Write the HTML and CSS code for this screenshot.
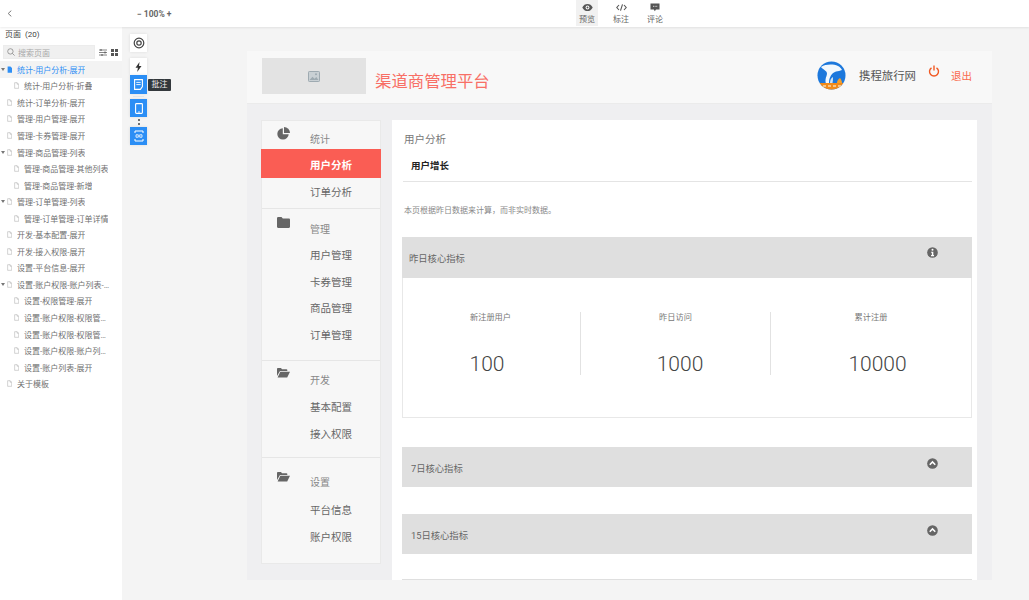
FILE: index.html
```html
<!DOCTYPE html>
<html lang="zh">
<head>
<meta charset="utf-8">
<title>渠道商管理平台</title>
<link rel="stylesheet" href="styles.css">
</head>
<body>
<svg class="defs" width="0" height="0" aria-hidden="true">
  <symbol id="doc" viewBox="0 0 8 10"><path d="M1 .5h4l2.500 2.500v6.500h-6.500z M5 .5v2.500h2.500" fill="#fff" stroke="#a8a8a8" stroke-width=".8"/></symbol>
  <symbol id="folder-open" viewBox="0 0 13 10"><path d="M0 1.200C0 .5.400.1 1 .1h3l1 1.200h4.500c.5 0 .8.300.8.800v.8H3L0 8z M3.300 3.800H13L10.200 9.600H.6z" fill="#666"/></symbol>
  <symbol id="chev-up" viewBox="0 0 12 12"><circle cx="6" cy="6" r="5.800" fill="#666"/><path d="M3 7.300l3-3 3 3" fill="none" stroke="#fff" stroke-width="1.700"/></symbol>
</svg>
<header class="topbar">
  <div class="back"><svg width="5" height="7" viewBox="0 0 5 7"><path d="M4.300.6L1.200 3.500 4.300 6.400" fill="none" stroke="#777" stroke-width="1"/></svg></div>
  <div class="zoom">− 100% +</div>
  <nav class="modes">
    <div class="mode mode-active">
      <svg width="11" height="8" viewBox="0 0 11 8"><path d="M.3 4C1.500 1.500 3.300.4 5.500.4S9.500 1.500 10.700 4C9.500 6.500 7.700 7.600 5.500 7.600S1.500 6.500.3 4z" fill="#555"/><circle cx="5.500" cy="4" r="1.900" fill="#fff"/><circle cx="5.500" cy="4" r="1" fill="#555"/></svg>
      <span>预览</span>
    </div>
    <div class="mode">
      <svg width="11" height="8" viewBox="0 0 11 8"><path d="M3 1.500L.8 4 3 6.500M8 1.500L10.200 4 8 6.500M6.500.8L4.500 7.200" fill="none" stroke="#555" stroke-width="1.100"/></svg>
      <span>标注</span>
    </div>
    <div class="mode">
      <svg width="10" height="9" viewBox="0 0 10 9"><path d="M.5.500h9v6H6L4.800 8.300 3.800 6.500H.5z" fill="#555"/><path d="M3 3.300h.8M4.700 3.300h.8M6.400 3.300h.8" stroke="#fff" stroke-width="1"/></svg>
      <span>评论</span>
    </div>
  </nav>
</header>
<div class="workspace">
  <aside class="sidebar">
    <div class="pages-title">页面&nbsp;&nbsp;(20)</div>
    <div class="search-row">
      <div class="search">
        <svg width="8" height="8" viewBox="0 0 8 8"><circle cx="3.400" cy="3.400" r="2.700" fill="none" stroke="#888" stroke-width=".8"/><path d="M5.400 5.400L7.600 7.600" stroke="#888" stroke-width=".8"/></svg>
        <span>搜索页面</span>
      </div>
      <svg class="tool" width="8" height="7" viewBox="0 0 8 7"><path d="M0 1h8M0 3.500h8M0 6h8" stroke="#777" stroke-width=".9"/><path d="M2 0v2M6 2.500v2M3 5v2" stroke="#555" stroke-width="1"/></svg>
      <svg class="tool" width="7" height="7" viewBox="0 0 7 7"><path d="M0 0h3v3H0zM4 0h3v3H4zM0 4h3v3H0zM4 4h3v3H4z" fill="#555"/></svg>
    </div>
    <ul class="tree">
      <li class="row row-active"><i class="caret"></i><svg class="doc" width="6" height="8" viewBox="0 0 8 10"><path d="M1 0h4.500L8 2.500V10H1z" fill="#2e8ff5"/></svg><span>统计-用户分析-展开</span></li>
      <li class="row sub"><svg class="doc"><use href="#doc"/></svg><span>统计-用户分析-折叠</span></li>
      <li class="row"><svg class="doc"><use href="#doc"/></svg><span>统计-订单分析-展开</span></li>
      <li class="row"><svg class="doc"><use href="#doc"/></svg><span>管理-用户管理-展开</span></li>
      <li class="row"><svg class="doc"><use href="#doc"/></svg><span>管理-卡券管理-展开</span></li>
      <li class="row"><i class="caret"></i><svg class="doc"><use href="#doc"/></svg><span>管理-商品管理-列表</span></li>
      <li class="row sub"><svg class="doc"><use href="#doc"/></svg><span>管理-商品管理-其他列表</span></li>
      <li class="row sub"><svg class="doc"><use href="#doc"/></svg><span>管理-商品管理-新增</span></li>
      <li class="row"><i class="caret"></i><svg class="doc"><use href="#doc"/></svg><span>管理-订单管理-列表</span></li>
      <li class="row sub"><svg class="doc"><use href="#doc"/></svg><span>管理-订单管理-订单详情</span></li>
      <li class="row"><svg class="doc"><use href="#doc"/></svg><span>开发-基本配置-展开</span></li>
      <li class="row"><svg class="doc"><use href="#doc"/></svg><span>开发-接入权限-展开</span></li>
      <li class="row"><svg class="doc"><use href="#doc"/></svg><span>设置-平台信息-展开</span></li>
      <li class="row"><i class="caret"></i><svg class="doc"><use href="#doc"/></svg><span>设置-账户权限-账户列表-展开</span></li>
      <li class="row sub"><svg class="doc"><use href="#doc"/></svg><span>设置-权限管理-展开</span></li>
      <li class="row sub"><svg class="doc"><use href="#doc"/></svg><span>设置-账户权限-权限管理-展开</span></li>
      <li class="row sub"><svg class="doc"><use href="#doc"/></svg><span>设置-账户权限-权限管理-新增</span></li>
      <li class="row sub"><svg class="doc"><use href="#doc"/></svg><span>设置-账户权限-账户列表-新增</span></li>
      <li class="row sub"><svg class="doc"><use href="#doc"/></svg><span>设置-账户列表-展开</span></li>
      <li class="row"><svg class="doc"><use href="#doc"/></svg><span>关于模板</span></li>
    </ul>
  </aside>
  <main class="canvas">
    <div class="float-tools">
      <div class="ft ft-white ft-target"><svg width="12" height="12" viewBox="0 0 12 12"><circle cx="6" cy="6" r="4.800" fill="none" stroke="#444" stroke-width="1.200"/><circle cx="6" cy="6" r="2.200" fill="none" stroke="#444" stroke-width="1.200"/></svg></div>
      <div class="ft ft-white ft-bolt"><svg width="7" height="10" viewBox="0 0 7 10"><path d="M4.500 0L.5 5.700h2.400L2.200 10l4.300-6H4z" fill="#333"/></svg></div>
      <div class="ft ft-blue ft-note"><svg width="9" height="11" viewBox="0 0 9 11"><path d="M.6.600h7.800v7L6.400 10.400H.6z" fill="none" stroke="#fff" stroke-width="1.100"/><path d="M2.300 3.400h4.400M2.300 5.600h4.400" stroke="#fff" stroke-width=".9"/></svg></div>
      <div class="ft-line"></div>
      <div class="ft ft-blue ft-phone"><svg width="8" height="11" viewBox="0 0 8 11"><rect x=".6" y=".6" width="6.800" height="9.800" rx=".8" fill="none" stroke="#fff" stroke-width="1.100"/><path d="M3 9h2" stroke="#fff" stroke-width=".8"/></svg></div>
      <div class="ft-dots"><i></i><i></i></div>
      <div class="ft ft-blue ft-scan"><svg width="10" height="12" viewBox="0 0 10 12"><path d="M1 3V1h8v2M1 9v2h8V9" fill="none" stroke="#fff" stroke-width="1"/><path d="M2 4.800h2.300v2.400H2zM5.700 4.800H8v2.400H5.700z" fill="none" stroke="#fff" stroke-width=".8"/></svg></div>
      <div class="tip">批注</div>
    </div>
    <section class="artboard">
      <header class="app-head">
        <div class="logo-ph"><svg width="12" height="11" viewBox="0 0 12 11"><rect x=".5" y=".5" width="11" height="10" rx=".8" fill="#c9d0d4" stroke="#9eaab1"/><path d="M1.500 9l3-3.300 2 2L8.300 6l2.200 3z" fill="#9eaab1"/><circle cx="8" cy="3.200" r="1" fill="#9eaab1"/></svg></div>
        <h1 class="app-title">渠道商管理平台</h1>
        <div class="app-right">
          <svg class="brand" width="29" height="29" viewBox="0 0 29 29"><defs><clipPath id="brand-clip"><circle cx="14.500" cy="14.500" r="14"/></clipPath></defs><g clip-path="url(#brand-clip)"><rect width="29" height="29" fill="#1c78dc"/><path d="M4 6c5-3 12-3 17-1 2 1 3 2 4 4-2 1-4 1-6 1.500-3 1-5 3-6 6-1 2-1 4-1 6.500H9c-1-3-.5-6 .5-8 1-3 .5-4-1.500-5.500C6.500 8 5 7.500 4 6z" fill="#f2f8fd"/><path d="M13 22c0-3 1-5 3-6 0 2 0 4-.5 6z" fill="#cfe5f8"/><path d="M20 22c0-2 1-4 3-5 1 1 2 3 2 5z" fill="#f5a02c"/><rect y="22" width="29" height="7" fill="#f08a1a"/><path d="M6 25h3M11 25h3M16 25h3M21 25h3" stroke="#fbd9a8" stroke-width="1.400"/></g></svg>
          <span class="brand-name">携程旅行网</span>
          <svg class="power" width="12" height="12" viewBox="0 0 12 12"><path d="M3.500 2.800a4.500 4.500 0 1 0 5 0" fill="none" stroke="#f15a24" stroke-width="1.400"/><path d="M6 .5v5" stroke="#f15a24" stroke-width="1.400"/></svg>
          <span class="logout">退出</span>
        </div>
      </header>
      <div class="app-body">
        <nav class="side-nav">
          <div class="group group-stat">
            <div class="group-head">
              <svg width="13" height="13" viewBox="0 0 13 13"><path d="M5.800 1.200A5.700 5.700 0 1 0 11.700 7.200H5.800z" fill="#666"/><path d="M7 0a6 6 0 0 1 6 6H7z" fill="#666"/></svg>
              <span>统计</span>
            </div>
            <a class="item item-active">用户分析</a>
            <a class="item">订单分析</a>
          </div>
          <div class="group group-manage">
            <div class="group-head">
              <svg width="13" height="11" viewBox="0 0 13 11"><path d="M0 1.300C0 .6.500 0 1.200 0h3.300l1.300 1.600h6c.7 0 1.200.5 1.200 1.200v7c0 .7-.5 1.200-1.200 1.200H1.200C.5 11 0 10.500 0 9.800z" fill="#666"/></svg>
              <span>管理</span>
            </div>
            <a class="item">用户管理</a>
            <a class="item">卡券管理</a>
            <a class="item">商品管理</a>
            <a class="item">订单管理</a>
          </div>
          <div class="group group-dev">
            <div class="group-head">
              <svg width="13" height="10"><use href="#folder-open"/></svg>
              <span>开发</span>
            </div>
            <a class="item">基本配置</a>
            <a class="item">接入权限</a>
          </div>
          <div class="group group-set">
            <div class="group-head">
              <svg width="13" height="10"><use href="#folder-open"/></svg>
              <span>设置</span>
            </div>
            <a class="item">平台信息</a>
            <a class="item">账户权限</a>
          </div>
        </nav>
        <div class="content">
          <div class="crumb">用户分析</div>
          <div class="tabs"><span>用户增长</span></div>
          <p class="note">本页根据昨日数据来计算，而非实时数据。</p>
          <section class="panel panel-first">
            <div class="panel-head"><span>昨日核心指标</span>
              <svg width="11" height="11" viewBox="0 0 12 12"><circle cx="6" cy="6" r="5.800" fill="#666"/><circle cx="6" cy="3" r="1.100" fill="#fff"/><path d="M4.500 5.100h2.400v3.600h.8V10H4.400V8.700h.9V6.300h-.8z" fill="#fff"/></svg>
            </div>
            <div class="stats">
              <div class="stat"><div class="stat-label">新注册用户</div><div class="stat-num num-a">100</div></div>
              <div class="stat"><div class="stat-label">昨日访问</div><div class="stat-num num-b">1000</div></div>
              <div class="stat"><div class="stat-label">累计注册</div><div class="stat-num num-c">10000</div></div>
            </div>
          </section>
          <section class="panel panel-week">
            <div class="panel-head"><span>7日核心指标</span><svg width="11" height="11"><use href="#chev-up"/></svg></div>
          </section>
          <section class="panel panel-half">
            <div class="panel-head"><span>15日核心指标</span><svg width="11" height="11"><use href="#chev-up"/></svg></div>
          </section>
          <section class="panel panel-last">
            <div class="panel-head"></div>
          </section>
        </div>
      </div>
    </section>
  </main>
</div>
</body>
</html>
```
FILE: styles.css
```css
* { box-sizing: border-box; }
html, body { margin: 0; height: 100%; }
body {
  width: 1029px;
  height: 600px;
  overflow: hidden;
  display: flex;
  flex-direction: column;
  font-family: Roboto, "Noto Sans CJK SC", sans-serif;
  color: #666;
  background: #f4f4f4;
}
.defs { position: absolute; }

.topbar {
  position: relative;
  z-index: 3;
  flex: 0 0 27px;
  display: flex;
  align-items: center;
  background: #fff;
  box-shadow: 0 1px 2px rgba(0,0,0,.08);
}
.back { width: 137px; padding-left: 7px; display: flex; align-items: center; }
.zoom { font-size: 8.500px; font-weight: bold; color: #666; }
.modes {
  position: absolute;
  left: 576px;
  top: 0;
  display: flex;
  gap: 12px;
}
.mode {
  width: 22px;
  height: 26px;
  display: flex;
  flex-direction: column;
  align-items: center;
  padding-top: 3px;
  gap: 2px;
  font-size: 8px;
  line-height: 11px;
  color: #666;
}
.mode svg { height: 9px; }
.mode-active { background: #f1f1f1; }

.workspace { flex: 1; display: flex; min-height: 0; }
.sidebar { flex: 0 0 122px; background: #fff; }
.pages-title { font-size: 8px; line-height: 12px; padding: 2px 0 0 5px; color: #444; height: 18px; }
.search-row { display: flex; align-items: center; padding-left: 3px; height: 14px; }
.search {
  width: 92px;
  height: 14px;
  display: flex;
  align-items: center;
  gap: 3px;
  padding-left: 3px;
  background: #f0f0f0;
  border: 1px solid #ececec;
  font-size: 8px;
  color: #a8a8a8;
}
.tool { margin-left: 4px; }
.tool + .tool { margin-left: 4px; }
.tree { list-style: none; margin: 2px 0 0; padding: 0; }
.row {
  position: relative;
  height: 16.550px;
  display: flex;
  align-items: center;
  padding-left: 7px;
  font-size: 8px;
  color: #707070;
  white-space: nowrap;
}
.row span { display: block; max-width: 97px; overflow: hidden; text-overflow: ellipsis; }
.row .doc { width: 5px; height: 7px; flex: none; margin-right: 5px; }
.sub { padding-left: 14px; }
.sub span { max-width: 87px; }
.row-active { background: #f3f3f3; color: #2e8ff5; }
.caret {
  position: absolute;
  left: 1px;
  top: 7px;
  border-left: 2px solid transparent;
  border-right: 2px solid transparent;
  border-top: 3px solid #777;
}

.canvas { position: relative; flex: 1; padding: 24px 37px 20px 125px; min-width: 0; }
.float-tools { position: absolute; left: 8px; top: 7px; width: 18px; }
.ft { width: 17px; display: flex; align-items: center; justify-content: center; box-shadow: 0 0 3px rgba(0,0,0,.1); }
.ft-white { background: #fff; }
.ft-blue { background: #2b8ef5; }
.ft-target { height: 18px; margin-bottom: 6px; }
.ft-bolt { height: 17px; }
.ft-note { height: 19px; }
.ft-line { width: 11px; height: 1px; margin: 2px 3px 2px; background: #dfe7ef; }
.ft-phone { height: 18px; }
.ft-dots { height: 10px; display: flex; flex-direction: column; align-items: center; justify-content: center; gap: 2px; }
.ft-dots i { width: 2px; height: 2px; background: #444; border-radius: 50%; }
.ft-scan { height: 18px; }
.tip {
  position: absolute;
  left: 18px;
  top: 45px;
  width: 23px;
  height: 12px;
  background: #33383c;
  color: #eee;
  font-size: 8px;
  line-height: 12px;
  text-align: center;
  border-radius: 1px;
}

.artboard { width: 745px; height: 529px; background: #efeff1; overflow: hidden; display: flex; flex-direction: column; }
.app-head {
  flex: 0 0 53px;
  display: flex;
  align-items: flex-start;
  background: #f8f8f8;
  border-bottom: 1px solid #ebebeb;
  padding: 7px 0 0 15px;
}
.logo-ph { width: 104px; height: 36px; background: #e3e3e3; display: flex; align-items: center; justify-content: center; }
.app-title { margin: 13px 0 0 9px; font-size: 16.400px; line-height: 22px; font-weight: normal; color: #f86f66; }
.app-right { margin-left: auto; display: flex; align-items: flex-start; padding-right: 20px; }
.brand { margin-top: 3px; }
.brand-name { margin: 10px 0 0 13px; font-size: 11.400px; line-height: 16px; color: #555; }
.power { margin: 7px 0 0 12px; }
.logout { margin: 11px 0 0 11px; font-size: 10.500px; line-height: 15px; color: #fa6a4e; }

.app-body { flex: 1; display: flex; align-items: flex-start; padding: 16px 15px 0 14px; gap: 11px; min-height: 0; }
.side-nav { flex: 0 0 120px; height: 444px; background: #f7f7f7; border: 1px solid #e9e9e9; }
.group { border-bottom: 1px solid #e6e6e6; }
.group:last-child { border-bottom: 0; }
.group-head { display: flex; align-items: flex-start; padding-left: 15px; font-size: 10px; line-height: 14px; color: #888; }
.group-head svg { flex: none; margin-top: 6px; }
.group-head span { position: relative; margin-left: 20px; }
.item { display: block; height: 26.700px; padding-left: 48px; font-size: 10.500px; line-height: 28.700px; color: #666; }
.item-active { height: 29px; line-height: 33px; margin: 0 -1px; padding-left: 49px; background: #fa5d54; color: #fff; font-weight: bold; }
.group-stat { height: 88px; }
.group-stat .group-head { height: 28px; }
.group-stat .group-head span { margin-top: 12px; }
.group-stat .item:not(.item-active) { line-height: 30.700px; }
.group-manage { height: 152px; }
.group-manage .group-head { height: 33px; }
.group-manage .group-head span { margin-top: 14px; }
.group-manage .group-head svg { margin-top: 8px; }
.group-dev { height: 97px; }
.group-dev .group-head { height: 33px; }
.group-dev .group-head span { margin-top: 13px; }
.group-dev .group-head svg { margin-top: 7px; }
.group-set .group-head { height: 39px; }
.group-set .group-head span { margin-top: 18px; }
.group-set .group-head svg { margin-top: 14px; }

.content { flex: 0 0 585px; height: 480px; background: #fff; padding: 0 5px 0 10px; overflow: hidden; }
.crumb { padding: 13px 0 0 2px; font-size: 10.500px; line-height: 14px; color: #777; }
.tabs { height: 35px; margin: 0 0 0 1px; padding-left: 8px; border-bottom: 1px solid #e4e4e4; }
.tabs span { display: block; padding-top: 12px; font-size: 9.500px; line-height: 14px; font-weight: bold; color: #222; }
.note { margin: 0; padding: 23px 0 0 2px; font-size: 8px; line-height: 12px; color: #888; }
.panel { width: 570px; }
.panel-head { display: flex; justify-content: space-between; align-items: flex-start; background: #dfdfdf; font-size: 9.300px; line-height: 14px; color: #666; }
.panel-first { margin-top: 20px; }
.panel-first .panel-head { height: 41px; padding: 15px 34px 0 7px; }
.panel-first .panel-head svg { margin-top: -5px; }
.panel-week { margin-top: 29px; }
.panel-half { margin-top: 27px; }
.panel-week .panel-head, .panel-half .panel-head { height: 40px; padding: 15px 34px 0 9px; }
.panel-week .panel-head svg, .panel-half .panel-head svg { margin-top: -4px; }
.panel-last { margin-top: 25px; }
.panel-last .panel-head { height: 20px; }
.stats {
  height: 140px;
  display: grid;
  grid-template-columns: 177px 190px 1fr;
  padding: 34px 0 0;
  border: 1px solid #e8e8e8;
  border-top: 0;
}
.stat { height: 63px; text-align: center; border-left: 1px solid #e2e2e2; }
.stat:first-child { border-left: 0; }
.stat:first-child .stat-label { padding-right: 2px; }
.stat-label { font-size: 8.200px; line-height: 10px; color: #777; }
.stat-num { margin-top: 30px; font-size: 21px; line-height: 24px; font-weight: 300; color: #444; }
.num-a { padding-right: 9px; }
.num-b { padding-left: 9px; }
.num-c { padding-left: 13px; }
```
